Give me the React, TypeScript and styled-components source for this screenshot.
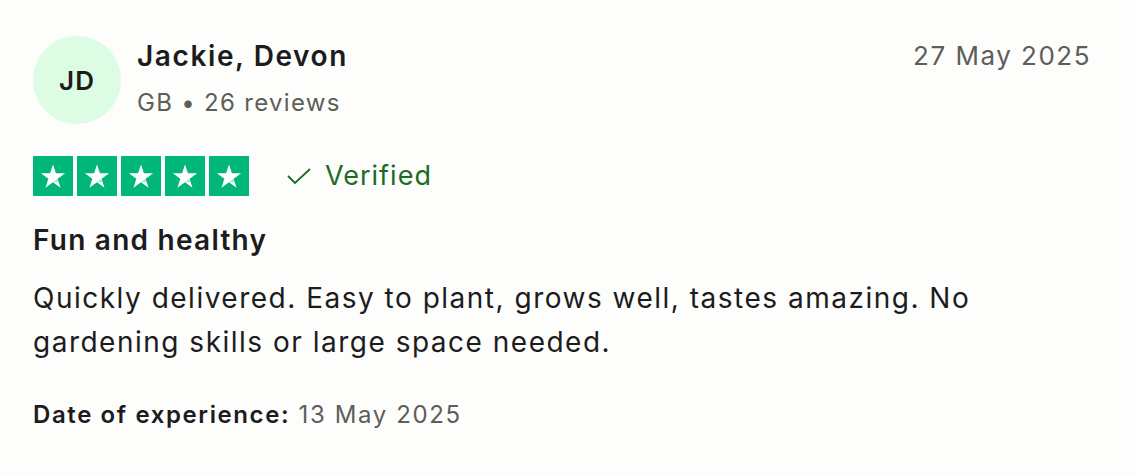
import React from "react";
import styled, { createGlobalStyle } from "styled-components";

const Global = createGlobalStyle`
  html, body { margin: 0; padding: 0; background: #fdfdfc; }
  body { font-family: Inter, "Noto Sans", Arial, sans-serif; color: #1c1c1c; }
`;

const Card = styled.article`
  box-sizing: border-box;
  width: 1135px;
  height: 475px;
  padding: 36px 44px 0 33px;
  display: flex;
  flex-direction: column;
`;

const Header = styled.header`
  display: flex;
  align-items: flex-start;
  gap: 16px;
`;

const Avatar = styled.div`
  width: 88px;
  height: 88px;
  border-radius: 50%;
  background: #dcfce3;
  display: flex;
  align-items: center;
  justify-content: center;
  font-size: 26px;
  font-weight: 600;
  letter-spacing: 1px;
  color: #1c1c1c;
  flex-shrink: 0;
`;

const Who = styled.div`
  display: flex;
  flex-direction: column;
  flex: 1;
  padding-top: 2px;
`;

const Name = styled.div`
  font-size: 28px;
  font-weight: 600;
  line-height: 36px;
  letter-spacing: 1.6px;
`;

const Meta = styled.div`
  font-size: 24px;
  line-height: 32px;
  letter-spacing: 1.3px;
  color: #5e5d59;
  margin-top: 13px;
`;

const DateText = styled.time`
  font-size: 26px;
  line-height: 36px;
  letter-spacing: 1.5px;
  color: #5e5d59;
  padding-top: 2px;
`;

const RatingRow = styled.div`
  display: flex;
  align-items: center;
  margin-top: 32px;
`;

const Stars = styled.div`
  display: flex;
  gap: 4px;
`;

const StarBox = styled.div`
  width: 40px;
  height: 40px;
  background: #00b67a;
  display: flex;
  align-items: center;
  justify-content: center;
`;

const Verified = styled.div`
  display: flex;
  align-items: center;
  gap: 14px;
  margin-left: 38px;
  color: #1b6b25;
  font-size: 27px;
  line-height: 36px;
  letter-spacing: 1px;
`;

const Title = styled.h2`
  margin: 26px 0 0;
  font-size: 28px;
  font-weight: 600;
  line-height: 36px;
  letter-spacing: 1.25px;
`;

const Body = styled.p`
  margin: 18px 0 0;
  font-size: 28px;
  line-height: 44px;
  font-weight: 400;
  letter-spacing: 1.5px;
`;

const Experience = styled.p`
  margin: 35px 0 0;
  font-size: 24px;
  line-height: 32px;
  letter-spacing: 1.6px;
`;

const Strong = styled.strong`
  font-weight: 600;
`;

const Muted = styled.span`
  color: #5e5d59;
`;

const Star = () => (
  <svg width="26" height="25" viewBox="0 0 24 23">
    <path
      d="M12 0.5 L14.7 8.6 L23.2 8.6 L16.3 13.6 L18.9 21.8 L12 16.7 L5.1 21.8 L7.7 13.6 L0.8 8.6 L9.3 8.6 Z"
      fill="#fff"
    />
    <path d="M16.3 13.6 L17.2 16.5 L12 16.7 Z" fill="#00b67a" opacity="0.35" />
  </svg>
);

const Check = () => (
  <svg width="24" height="16" viewBox="0 0 24 16" fill="none">
    <path d="M1 8 L8 15 L23 1" stroke="#1b6b25" strokeWidth="1.8" />
  </svg>
);

export default function App() {
  return (
    <>
      <Global />
      <Card>
        <Header>
          <Avatar>JD</Avatar>
          <Who>
            <Name>Jackie, Devon</Name>
            <Meta>GB • 26 reviews</Meta>
          </Who>
          <DateText>27 May 2025</DateText>
        </Header>
        <RatingRow>
          <Stars>
            {[0, 1, 2, 3, 4].map((i) => (
              <StarBox key={i}>
                <Star />
              </StarBox>
            ))}
          </Stars>
          <Verified>
            <Check />
            Verified
          </Verified>
        </RatingRow>
        <Title>Fun and healthy</Title>
        <Body>
          Quickly delivered. Easy to plant, grows well, tastes amazing. No gardening skills or large space needed.
        </Body>
        <Experience>
          <Strong>Date of experience:</Strong> <Muted>13 May 2025</Muted>
        </Experience>
      </Card>
    </>
  );
}
